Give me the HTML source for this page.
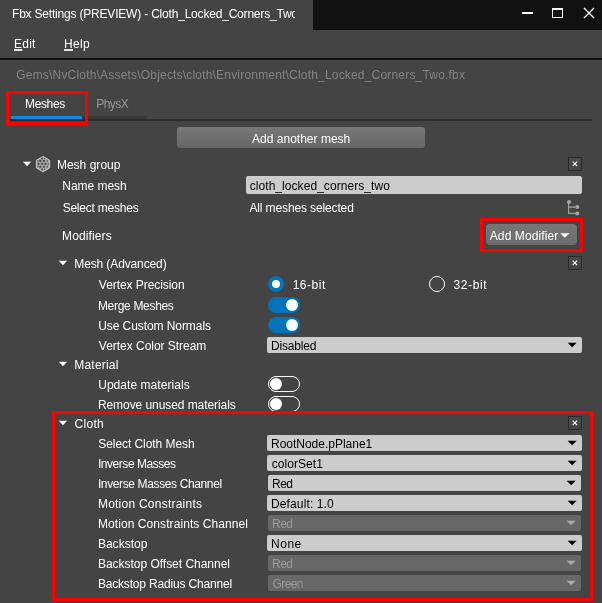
<!DOCTYPE html>
<html><head><meta charset="utf-8"><title>Fbx Settings</title>
<style>
html,body{margin:0;padding:0;background:#444;}
body{width:602px;height:603px;position:relative;overflow:hidden;font-family:"Liberation Sans",sans-serif;font-size:12px;}
.t{position:absolute;white-space:pre;line-height:14px;font-size:12px;}
.a{position:absolute;}
u{text-underline-offset:1.2px;text-decoration-thickness:1.5px;text-decoration-color:rgba(255,255,255,.85);}
.dd{position:absolute;left:267px;width:315px;height:16px;border-radius:2px;background:#ccc;}
.dd.ch{left:268px;width:313px;}
.dd.dis{background:#676767;}
.arr{position:absolute;width:0;height:0;border-left:4.6px solid transparent;border-right:4.6px solid transparent;border-top:4.5px solid #000;}
.tri{position:absolute;width:0;height:0;border-left:3.5px solid transparent;border-right:3.5px solid transparent;border-top:4px solid #fff;}
.xb{position:absolute;left:568px;width:12px;height:12px;border:1px solid #2b2b2b;background:linear-gradient(#4b4b4b,#424242);}
.red{position:absolute;border:3px solid #f00;box-sizing:border-box;}
</style></head><body><div id="root" style="position:absolute;left:0;top:0;width:602px;height:603px;will-change:transform">
<div class="a" style="left:313px;top:0;width:289px;height:30px;background:#111"></div>
<div class="a" style="left:0;top:0;width:295px;height:30px;overflow:hidden"><span class="t" style="left:12.00px;top:7.0px;color:#fff;letter-spacing:-0.196px;">Fbx Settings (PREVIEW) - Cloth_Locked_Corners_Two</span>
</div>
<div class="a" style="left:522px;top:12px;width:10.5px;height:2px;background:#fff"></div>
<div class="a" style="left:552px;top:8px;width:9px;height:7px;border:1px solid #fff;border-top-width:2px"></div>
<svg class="a" style="left:583px;top:7px" width="12" height="12" viewBox="0 0 12 12"><path d="M1 1 L11 11 M11 1 L1 11" stroke="#fff" stroke-width="1.4" fill="none"/></svg>
<div class="a" style="left:0;top:58px;width:602px;height:2px;background:#111"></div>
<div class="a" style="left:11px;top:116px;width:136px;height:3px;background:#3a3a3a"></div>
<div class="a" style="left:10px;top:119px;width:582px;height:2px;background:#2d2d2d"></div>
<div class="a" style="left:11px;top:116px;width:71px;height:3px;background:#0a8ce8"></div>
<div class="red" style="left:6px;top:91px;width:82px;height:34px"></div>
<div class="a" style="left:177px;top:127px;width:248px;height:21px;border-radius:3px;background:linear-gradient(#787878,#666);"></div>
<svg class="a" style="left:21px;top:160px" width="12" height="8"><polygon points="1.90,1.80 10.20,1.80 6.05,6.30" fill="#fff"/></svg>
<svg class="a" style="left:33px;top:154px" width="20" height="20" viewBox="0 0 20 20"><polygon points="10.05,2.4 16.65,6.25 16.65,13.95 10.05,17.8 3.45,13.95 3.45,6.25" fill="#a6a6a6" stroke="#cacaca" stroke-width="1"/><circle cx="5.5" cy="9.9" r="1.15" fill="#484848"/><circle cx="9.1" cy="9.9" r="1.15" fill="#484848"/><circle cx="12.6" cy="9.9" r="1.15" fill="#484848"/><circle cx="15.3" cy="9.9" r="0.7" fill="#484848"/><circle cx="4.9" cy="7" r="0.7" fill="#484848"/><circle cx="7.3" cy="7" r="1.15" fill="#484848"/><circle cx="10.9" cy="7" r="1.15" fill="#484848"/><circle cx="14.4" cy="7" r="0.8" fill="#484848"/><circle cx="4.9" cy="12.8" r="0.7" fill="#484848"/><circle cx="7.3" cy="12.8" r="1.15" fill="#484848"/><circle cx="10.9" cy="12.8" r="1.15" fill="#484848"/><circle cx="14.4" cy="12.8" r="0.8" fill="#484848"/><circle cx="9.1" cy="4.4" r="0.9" fill="#484848"/><circle cx="11.7" cy="4.6" r="0.6" fill="#484848"/><circle cx="9.1" cy="15.4" r="0.9" fill="#484848"/><circle cx="11.7" cy="15.2" r="0.6" fill="#484848"/></svg>
<div class="xb" style="top:157px"><svg width="12" height="12" viewBox="0 0 12 12" style="display:block"><path d="M3.7 3.7 L8.1 8.1 M8.1 3.7 L3.7 8.1" stroke="#fff" stroke-width="1.15"/></svg></div>
<div class="xb" style="top:256px"><svg width="12" height="12" viewBox="0 0 12 12" style="display:block"><path d="M3.7 3.7 L8.1 8.1 M8.1 3.7 L3.7 8.1" stroke="#fff" stroke-width="1.15"/></svg></div>
<div class="xb" style="top:416px"><svg width="12" height="12" viewBox="0 0 12 12" style="display:block"><path d="M3.7 3.7 L8.1 8.1 M8.1 3.7 L3.7 8.1" stroke="#fff" stroke-width="1.15"/></svg></div>
<div class="a" style="left:246px;top:176px;width:336px;height:18px;border-radius:2px;background:#ccc"></div>
<svg class="a" style="left:564px;top:198px" width="18" height="20" viewBox="0 0 18 20"><path d="M4.6 4 V15.4 H13 M4.6 9.1 H13" stroke="#a0a0a0" stroke-width="1.2" fill="none"/><circle cx="5" cy="4" r="2" fill="#a4a4a4"/><circle cx="13.3" cy="9.1" r="2" fill="#a4a4a4"/><circle cx="13.3" cy="15.4" r="2" fill="#a4a4a4"/></svg>
<div class="a" style="left:486px;top:224px;width:91px;height:21px;border-radius:4px;background:linear-gradient(#777,#6b6b6b)"></div>
<svg class="a" style="left:559px;top:232px" width="13" height="8"><polygon points="1.30,1.30 10.50,1.30 5.90,5.80" fill="#fff"/></svg>
<div class="red" style="left:480px;top:218px;width:103px;height:34px"></div>
<svg class="a" style="left:57px;top:259px" width="12" height="8"><polygon points="1.80,1.70 10.10,1.70 5.95,6.20" fill="#fff"/></svg>
<svg class="a" style="left:57px;top:360px" width="12" height="8"><polygon points="1.80,1.70 10.10,1.70 5.95,6.20" fill="#fff"/></svg>
<svg class="a" style="left:57px;top:419px" width="12" height="8"><polygon points="1.80,1.70 10.10,1.70 5.95,6.20" fill="#fff"/></svg>
<div class="a" style="left:268px;top:276px;width:16px;height:16px;border-radius:50%;background:#0073bb"></div>
<div class="a" style="left:272px;top:280px;width:8px;height:8px;border-radius:50%;background:#fff"></div>
<div class="a" style="left:429px;top:276px;width:14px;height:14px;border-radius:50%;border:1px solid #fff"></div>
<div class="a" style="left:268px;top:297px;width:32px;height:16px;border-radius:8px;background:#0073bb"></div>
<div class="a" style="left:286px;top:299px;width:12px;height:12px;border-radius:50%;background:#fff"></div>
<div class="a" style="left:268px;top:317px;width:32px;height:16px;border-radius:8px;background:#0073bb"></div>
<div class="a" style="left:286px;top:319px;width:12px;height:12px;border-radius:50%;background:#fff"></div>
<div class="a" style="left:268px;top:376px;width:30px;height:14px;border-radius:8px;border:1px solid #fff"></div>
<div class="a" style="left:270px;top:378px;width:12px;height:12px;border-radius:50%;background:#fff"></div>
<div class="a" style="left:268px;top:396px;width:30px;height:14px;border-radius:8px;border:1px solid #fff"></div>
<div class="a" style="left:270px;top:398px;width:12px;height:12px;border-radius:50%;background:#fff"></div>
<div class="dd" style="top:337px"></div>
<svg class="a" style="left:566px;top:341px" width="12" height="8"><polygon points="1.60,1.70 10.60,1.70 6.10,6.20" fill="#000"/></svg>
<div class="dd" style="top:435px"></div>
<svg class="a" style="left:566px;top:439px" width="12" height="8"><polygon points="1.60,1.70 10.60,1.70 6.10,6.20" fill="#000"/></svg>
<div class="dd" style="top:455px"></div>
<svg class="a" style="left:566px;top:459px" width="12" height="8"><polygon points="1.60,1.70 10.60,1.70 6.10,6.20" fill="#000"/></svg>
<div class="dd ch" style="top:475px"></div>
<svg class="a" style="left:565px;top:479px" width="12" height="8"><polygon points="1.60,1.70 10.60,1.70 6.10,6.20" fill="#000"/></svg>
<div class="dd" style="top:495px"></div>
<svg class="a" style="left:566px;top:499px" width="12" height="8"><polygon points="1.60,1.70 10.60,1.70 6.10,6.20" fill="#000"/></svg>
<div class="dd ch dis" style="top:515px"></div>
<svg class="a" style="left:565px;top:519px" width="12" height="8"><polygon points="1.60,1.70 10.60,1.70 6.10,6.20" fill="#aaa"/></svg>
<div class="dd" style="top:535px"></div>
<svg class="a" style="left:566px;top:539px" width="12" height="8"><polygon points="1.60,1.70 10.60,1.70 6.10,6.20" fill="#000"/></svg>
<div class="dd ch dis" style="top:555px"></div>
<svg class="a" style="left:565px;top:559px" width="12" height="8"><polygon points="1.60,1.70 10.60,1.70 6.10,6.20" fill="#aaa"/></svg>
<div class="dd ch dis" style="top:575px"></div>
<svg class="a" style="left:565px;top:579px" width="12" height="8"><polygon points="1.60,1.70 10.60,1.70 6.10,6.20" fill="#aaa"/></svg>
<span class="t" style="left:14.00px;top:37.0px;color:#fff;letter-spacing:0.254px;"><u>E</u>dit</span>
<span class="t" style="left:64.00px;top:37.0px;color:#fff;letter-spacing:0.349px;"><u>H</u>elp</span>
<span class="t" style="left:16.31px;top:68.0px;color:#848484;letter-spacing:0.189px;">Gems\NvCloth\Assets\Objects\cloth\Environment\Cloth_Locked_Corners_Two.fbx</span>
<span class="t" style="left:25.00px;top:97.0px;color:#fff;letter-spacing:-0.364px;">Meshes</span>
<span class="t" style="left:96.20px;top:97.0px;color:#999;letter-spacing:-0.545px;">PhysX</span>
<span class="t" style="left:252.07px;top:132.0px;color:#fff;letter-spacing:0.009px;">Add another mesh</span>
<span class="t" style="left:56.90px;top:158.0px;color:#fff;letter-spacing:0.020px;">Mesh group</span>
<span class="t" style="left:62.30px;top:179.0px;color:#fff;letter-spacing:-0.039px;">Name mesh</span>
<span class="t" style="left:62.63px;top:201.0px;color:#fff;letter-spacing:-0.222px;">Select meshes</span>
<span class="t" style="left:62.10px;top:229.0px;color:#fff;letter-spacing:0.121px;">Modifiers</span>
<span class="t" style="left:74.30px;top:257.0px;color:#fff;letter-spacing:-0.121px;">Mesh (Advanced)</span>
<span class="t" style="left:98.86px;top:278.0px;color:#fff;letter-spacing:-0.065px;">Vertex Precision</span>
<span class="t" style="left:97.90px;top:299.0px;color:#fff;letter-spacing:-0.309px;">Merge Meshes</span>
<span class="t" style="left:98.17px;top:319.0px;color:#fff;letter-spacing:-0.070px;">Use Custom Normals</span>
<span class="t" style="left:98.86px;top:339.0px;color:#fff;letter-spacing:-0.031px;">Vertex Color Stream</span>
<span class="t" style="left:74.30px;top:358.0px;color:#fff;letter-spacing:0.200px;">Material</span>
<span class="t" style="left:98.17px;top:378.0px;color:#fff;letter-spacing:0.053px;">Update materials</span>
<span class="t" style="left:97.90px;top:398.0px;color:#fff;letter-spacing:-0.067px;">Remove unused materials</span>
<span class="t" style="left:74.54px;top:417.0px;color:#fff;letter-spacing:0.287px;">Cloth</span>
<span class="t" style="left:98.23px;top:437.0px;color:#fff;letter-spacing:-0.061px;">Select Cloth Mesh</span>
<span class="t" style="left:97.90px;top:457.0px;color:#fff;letter-spacing:-0.448px;">Inverse Masses</span>
<span class="t" style="left:97.90px;top:477.0px;color:#fff;letter-spacing:-0.374px;">Inverse Masses Channel</span>
<span class="t" style="left:97.90px;top:497.0px;color:#fff;letter-spacing:0.240px;">Motion Constraints</span>
<span class="t" style="left:97.90px;top:517.0px;color:#fff;letter-spacing:0.082px;">Motion Constraints Channel</span>
<span class="t" style="left:97.90px;top:537.0px;color:#fff;letter-spacing:0.025px;">Backstop</span>
<span class="t" style="left:97.90px;top:557.0px;color:#fff;letter-spacing:-0.019px;">Backstop Offset Channel</span>
<span class="t" style="left:97.90px;top:577.0px;color:#fff;letter-spacing:-0.175px;">Backstop Radius Channel</span>
<span class="t" style="left:249.47px;top:201.0px;color:#fff;letter-spacing:-0.132px;">All meshes selected</span>
<span class="t" style="left:292.67px;top:278.0px;color:#fff;letter-spacing:0.521px;">16-bit</span>
<span class="t" style="left:453.47px;top:278.0px;color:#fff;letter-spacing:0.619px;">32-bit</span>
<span class="t" style="left:249.74px;top:179.0px;color:#000;letter-spacing:0.058px;">cloth_locked_corners_two</span>
<span class="t" style="left:489.77px;top:229.0px;color:#fff;letter-spacing:0.101px;">Add Modifier</span>
<span class="t" style="left:271.00px;top:339.0px;color:#000;letter-spacing:-0.186px;">Disabled</span>
<span class="t" style="left:271.00px;top:437.0px;color:#000;letter-spacing:-0.013px;">RootNode.pPlane1</span>
<span class="t" style="left:271.64px;top:457.0px;color:#000;letter-spacing:0.073px;">colorSet1</span>
<span class="t" style="left:272.00px;top:477.0px;color:#000;letter-spacing:-0.506px;">Red</span>
<span class="t" style="left:271.00px;top:497.0px;color:#000;letter-spacing:0.125px;">Default: 1.0</span>
<span class="t" style="left:272.00px;top:517.0px;color:#999;letter-spacing:-0.506px;">Red</span>
<span class="t" style="left:271.00px;top:537.0px;color:#000;letter-spacing:0.532px;">None</span>
<span class="t" style="left:272.00px;top:557.0px;color:#999;letter-spacing:-0.506px;">Red</span>
<span class="t" style="left:272.61px;top:577.0px;color:#999;letter-spacing:-0.641px;">Green</span>
<div class="red" style="left:52px;top:411px;width:541px;height:190px"></div>
</div></body></html>
